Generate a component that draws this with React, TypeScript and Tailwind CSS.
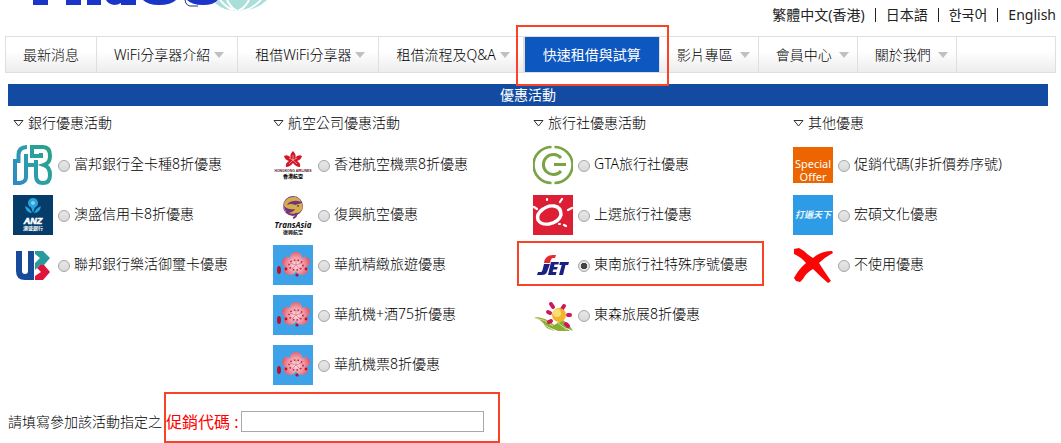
import React, { useState } from 'react';

interface NavItem {
  label: string;
  menu?: boolean;
  wide?: boolean;
  active?: boolean;
}

interface Offer {
  id: string;
  label: string;
  logo: React.ReactNode;
  marked?: boolean;
}

interface OfferGroup {
  title: string;
  offers: Offer[];
}

const FubonLogo = () => (
  <svg viewBox="0 0 40 40" className="h-10 w-10">
    <defs>
      <linearGradient id="fubon" gradientUnits="userSpaceOnUse" x1="0" x2="40" y1="30" y2="10">
        <stop offset="0" stopColor="#2f8bc4" />
        <stop offset="0.5" stopColor="#2a9fa8" />
        <stop offset="1" stopColor="#27a385" />
      </linearGradient>
    </defs>
    <g fill="none" stroke="url(#fubon)" strokeWidth="4">
      <path d="M14 2Q5.500 2 5.500 10V16H2V38H7Q13 37 13 32V9" />
      <path d="M13 20H23" />
      <path d="M23 15V31Q23 38 30 38Q37 38 37 30Q37 22 31 20Q37 18 37 11Q37 2 30 2H19V11H28V8" />
    </g>
  </svg>
);

const AnzLogo = () => (
  <svg viewBox="0 0 40 40" className="h-10 w-10">
    <rect width="40" height="40" fill="#053c69" />
    <g fill="#27a5df">
      <circle cx="20" cy="8" r="5" />
      <path d="M12 11Q17 13 19 18Q13 18 12 11ZM28 11Q23 13 21 18Q27 18 28 11Z" />
      <path d="M18 12H22L20 18Z" />
    </g>
    <circle cx="20" cy="8" r="2" fill="#8ccbe9" />
    <text x="20" y="29" fontSize="9" fontWeight="900" fontStyle="italic" textAnchor="middle" fill="#fff" stroke="#fff" strokeWidth="0.6" fontFamily="Liberation Sans, sans-serif">ANZ</text>
    <text x="20" y="35" fontSize="5" fontWeight="700" textAnchor="middle" fill="#fff" fontFamily="Noto Sans CJK TC, sans-serif">澳盛銀行</text>
  </svg>
);

const UnionLogo = () => (
  <svg viewBox="0 0 40 40" className="h-10 w-10">
    <path fill="#184a9b" d="M3 6H9V26Q9 29 12 29Q15 29 15 26V6H21V35H12Q3 35 3 26Z" />
    <path fill="#2a9a9c" d="M22 6H30L37 13L31 20H27L22 25V18L27 13L22 9Z" />
    <path fill="#e0133c" d="M27 20H31L37 27L30 35H22V31L28 27L24 23Z" />
  </svg>
);

const HongKongAirlinesLogo = () => (
  <svg viewBox="0 0 40 40" className="h-10 w-10">
    <path fill="#d51526" d="M20 6Q24 10 22 13Q25 9 29 11Q28 15 24 16Q28 18 27 22Q23 22 20 18Q17 22 13 22Q12 18 16 16Q12 15 11 11Q15 9 18 13Q16 10 20 6Z" />
    <path stroke="#fff" strokeWidth="0.5" d="M20 10V15L24 13M20 15L24 19M20 15L16 19M20 15L16 13" fill="none" />
    <text x="20" y="27" fontSize="3.4" fontWeight="700" textAnchor="middle" fill="#55101a" fontFamily="Liberation Sans, sans-serif">HONGKONG AIRLINES</text>
    <text x="20" y="33" fontSize="5" fontWeight="900" textAnchor="middle" fill="#111" fontFamily="Noto Sans CJK TC, sans-serif">香港航空</text>
  </svg>
);

const TransAsiaLogo = () => (
  <svg viewBox="0 0 40 40" className="h-10 w-10">
    <circle cx="20" cy="11" r="10" fill="#71357b" />
    <path fill="#d5ae48" d="M11 8Q14 1 22 2Q27 3 28 7Q24 5 20 6Q15 7 14 10Q18 8 22 10L29 8Q31 13 27 17Q22 20 15 18Q21 17 22 14Q16 15 12 12Q10 10 11 8Z" />
    <path d="M12 7Q9 12 13 17" stroke="#b88ac0" fill="none" />
    <path d="M20 23Q24 22 23 18" stroke="#71357b" strokeWidth="2" fill="none" />
    <circle cx="25" cy="11" r="1" fill="#71357b" />
    <text x="20" y="33" fontSize="8" fontWeight="700" fontStyle="italic" textAnchor="middle" fill="#111" fontFamily="Open Sans, sans-serif">TransAsia</text>
    <text x="20" y="39" fontSize="5" fontWeight="700" textAnchor="middle" fill="#111" fontFamily="Noto Sans CJK TC, sans-serif">復興航空</text>
  </svg>
);

const ChinaAirlinesLogo = () => (
  <svg viewBox="0 0 40 40" className="h-10 w-10">
    <defs>
      <radialGradient id="plum" cx="23" cy="20" r="14" gradientUnits="userSpaceOnUse">
        <stop offset="0" stopColor="#fbe3e6" />
        <stop offset="0.5" stopColor="#f1a3ae" />
        <stop offset="1" stopColor="#e0596c" />
      </radialGradient>
    </defs>
    <rect width="40" height="40" fill="#3ea2e9" />
    <g fill="url(#plum)">
      <ellipse cx="23" cy="12" rx="6" ry="5" />
      <ellipse cx="14" cy="17" rx="5" ry="5" />
      <ellipse cx="32" cy="17" rx="5" ry="5" />
      <ellipse cx="17" cy="25" rx="6" ry="5" />
      <ellipse cx="29" cy="25" rx="6" ry="5" />
      <circle cx="23" cy="20" r="6" />
    </g>
    <g fill="none" stroke="#c4263f" strokeWidth="1">
      <path d="M23 20L17 18M23 20L29 18M23 20L19 24M23 20L27 24M23 20V15" opacity="0.4" />
      <ellipse cx="23" cy="20" rx="7" ry="5" strokeWidth="1.6" strokeDasharray="1.5 2.2" />
    </g>
    <g fill="#b8102b">
      <ellipse cx="6" cy="25" rx="2" ry="4" />
      <circle cx="13" cy="24" r="1.4" />
      <circle cx="33" cy="24" r="1.4" />
      <circle cx="24" cy="30" r="1.6" />
    </g>
  </svg>
);

const GtaLogo = () => (
  <svg viewBox="0 0 40 40" className="h-10 w-10" fill="none" stroke="#7aa345">
    <path d="M21.5 2A18 18 0 0 1 21.5 38M18.5 38A18 18 0 0 1 18.5 2" strokeWidth="2.6" />
    <path d="M28 13A10 10 0 1 0 28 26" strokeWidth="3" />
    <path d="M21 19.5H33" strokeWidth="3" />
  </svg>
);

const SunLogo = () => (
  <svg viewBox="0 0 40 40" className="h-10 w-10">
    <rect width="40" height="40" fill="#dd1f35" />
    <path d="M10 14Q3 19 5 25Q8 30 16 29Q26 27 28 20Q28 12 21 11Q14 10 8 16" fill="none" stroke="#fff" strokeWidth="3.4" strokeLinecap="round" />
    <path d="M1 12L4 14M14 4V5M29 4L27 7M39 13L35 15M26 29L27 29M31 30L33 31" stroke="#fff" strokeWidth="2.2" strokeLinecap="round" />
  </svg>
);

const JetLogo = () => (
  <svg viewBox="0 0 40 40" className="h-10 w-10">
    <path fill="#e52a2d" d="M11 18Q12 10 20 10H23L22 13H20Q18 13 17 18Z" />
    <path fill="#1b2180" d="M11 19H17L14 27Q13 30 9 30H4L5 27H8Q9 27 9.500 25Z" />
    <path fill="#1b2180" d="M18 17H26L25.300 19.500H21.500L21 22H24.700L24 24.500H20.300L19.600 27H23.500L22.700 30H15Z" />
    <path fill="#1b2180" d="M27 17H36L35.200 20H32.500L30 30H26L28.700 20H26.300Z" />
  </svg>
);

const FlowerLogo = () => (
  <svg viewBox="0 0 40 40" className="h-10 w-10">
    <path fill="#8aad36" d="M1 22Q13 22 21 30L30 25Q36 29 40 36L31 32L37 36H25L13 31Q19 34 22 36Q12 34 11 29Q7 24 1 22Z" />
    <path d="M12 30L21 36M24 27L34 35M2 23Q12 24 20 31" stroke="#d6df91" fill="none" />
    <g stroke="#d0165c" strokeWidth="4" strokeLinecap="round">
      <path d="M18 9L20 12M31 11L29 14M37 20H35M35 31L33 29M16 27L18 26M15 17L17 18" />
    </g>
    <circle cx="26" cy="20" r="7" fill="#f2b42f" />
    <circle cx="24" cy="18" r="4" fill="#f8df75" />
  </svg>
);

const SpecialOfferLogo = () => (
  <span className="flex h-9 w-10 flex-col items-center justify-end bg-[#ec6500] text-[11px] font-normal leading-[13px] text-white">
    <span>Special</span>
    <span>Offer</span>
  </span>
);

const HongshuoLogo = () => (
  <svg viewBox="0 0 40 40" className="h-10 w-10">
    <rect width="40" height="40" fill="#2e9be6" />
    <text x="20" y="23" fontSize="9" fontWeight="700" fontStyle="italic" textAnchor="middle" fill="#e8f5fd" fontFamily="Noto Sans CJK TC, sans-serif">打遍天下</text>
  </svg>
);

const CrossLogo = () => (
  <svg viewBox="0 0 40 40" className="h-10 w-10">
    <path fill="#fb0606" d="M1 4L6 3L11 6Q15 10 20 13Q28 6 39 6L40 8Q32 12 26 18Q31 26 38 36L35 38Q28 32 20 24Q13 28 10 34L7 37L3 36L1 33Q5 25 13 18Q8 12 1 9Z" />
  </svg>
);

const SiteLogo = () => (
  <svg viewBox="0 0 252 14" className="h-[14px] w-[252px]">
    <path
      fill="#1b35c8"
      d="M9 0H24V5H9ZM42 0H57V5H42ZM63 0H77V5H63ZM82 0H112V5H97V3Q94 5 90 5Q84 4 82 0ZM119 0H152Q147 5 135 5Q124 5 119 0ZM163 0H194Q190 5 179 5Q168 5 163 0Z"
    />
    <path d="M161 0Q162 7 169 6H174" stroke="#26327d" fill="none" />
    <path d="M191 3L195 0H243Q232 11 214 11Q200 11 191 3Z" fill="#a9dfd8" />
    <path d="M203 0Q207 8 213 11M225 0Q221 8 214 11M237 0Q228 9 218 11M196 0Q203 8 209 10" stroke="#fff" strokeWidth="2" fill="none" />
  </svg>
);

const languages = ['繁體中文(香港)', '日本語', '한국어', 'English'];

const navItems: NavItem[] = [
  { label: '最新消息' },
  { label: 'WiFi分享器介紹', menu: true, wide: true },
  { label: '租借WiFi分享器', menu: true, wide: true },
  { label: '租借流程及Q&A', menu: true, wide: true },
  { label: '快速租借與試算', active: true },
  { label: '影片專區', menu: true },
  { label: '會員中心', menu: true },
  { label: '關於我們', menu: true }
];

const groups: OfferGroup[] = [
  {
    title: '銀行優惠活動',
    offers: [
      { id: 'fubon', label: '富邦銀行全卡種8折優惠', logo: <FubonLogo /> },
      { id: 'anz', label: '澳盛信用卡8折優惠', logo: <AnzLogo /> },
      { id: 'union', label: '聯邦銀行樂活御璽卡優惠', logo: <UnionLogo /> }
    ]
  },
  {
    title: '航空公司優惠活動',
    offers: [
      { id: 'hka', label: '香港航空機票8折優惠', logo: <HongKongAirlinesLogo /> },
      { id: 'transasia', label: '復興航空優惠', logo: <TransAsiaLogo /> },
      { id: 'cal-tour', label: '華航精緻旅遊優惠', logo: <ChinaAirlinesLogo /> },
      { id: 'cal-hotel', label: '華航機+酒75折優惠', logo: <ChinaAirlinesLogo /> },
      { id: 'cal-ticket', label: '華航機票8折優惠', logo: <ChinaAirlinesLogo /> }
    ]
  },
  {
    title: '旅行社優惠活動',
    offers: [
      { id: 'gta', label: 'GTA旅行社優惠', logo: <GtaLogo /> },
      { id: 'sun', label: '上選旅行社優惠', logo: <SunLogo /> },
      { id: 'jet', label: '東南旅行社特殊序號優惠', logo: <JetLogo />, marked: true },
      { id: 'flower', label: '東森旅展8折優惠', logo: <FlowerLogo /> }
    ]
  },
  {
    title: '其他優惠',
    offers: [
      { id: 'promo', label: '促銷代碼(非折價券序號)', logo: <SpecialOfferLogo /> },
      { id: 'hongshuo', label: '宏碩文化優惠', logo: <HongshuoLogo /> },
      { id: 'none', label: '不使用優惠', logo: <CrossLogo /> }
    ]
  }
];

const MenuArrow = () => (
  <svg viewBox="0 0 10 6" className="h-[6px] w-[10px] shrink-0">
    <path d="M0 0H10L5 6Z" fill="#c0c0c0" />
  </svg>
);

const App: React.FC = () => {
  const [selected, setSelected] = useState('jet');
  const [code, setCode] = useState('');

  return (
    <div className="bg-white font-['Noto_Sans','Noto_Sans_CJK_TC','Noto_Sans_CJK_KR',sans-serif] text-sm font-light leading-5 text-black">
      <header className="flex h-9 items-start justify-between pl-6 pr-[5px]">
        <SiteLogo />
        <div className="flex items-center pt-[5px] font-normal text-[#222]">
          {languages.map((lang, i) => (
            <React.Fragment key={lang}>
              {i > 0 && <span className="mx-[10px] h-[14px] w-px bg-[#222]" />}
              <a href="#" className="whitespace-nowrap">{lang}</a>
            </React.Fragment>
          ))}
        </div>
      </header>

      <nav className="mx-[5px] flex border border-[#dfdfdf] bg-linear-to-b from-white from-40% to-[#ededed]">
        {navItems.map((item) =>
          item.active ? (
            <a
              key={item.label}
              href="#"
              className="relative flex h-[35px] items-center whitespace-nowrap border-x border-[#dfdfdf] bg-[#0d57c1] bg-clip-padding px-[18px] font-normal text-white"
            >
              {item.label}
              <span className="pointer-events-none absolute -bottom-[14px] -left-[9px] -right-[10px] -top-[12px] z-10 border-2 border-[#fa4226]" />
            </a>
          ) : (
            <a
              key={item.label}
              href="#"
              className={`flex h-[35px] items-center whitespace-nowrap border-r border-[#dfdfdf] pl-[17px] ${
                item.wide ? 'gap-1 pr-[13px]' : item.menu ? 'gap-[7px] pr-2' : 'pr-[17px]'
              }`}
            >
              {item.label}
              {item.menu && <MenuArrow />}
            </a>
          )
        )}
      </nav>

      <main className="ml-2 mr-[13px] pt-[11px]">
        <h1 className="h-[22px] bg-[#144ba2] text-center font-normal leading-[22px] text-white">優惠活動</h1>

        <div className="grid grid-cols-4 pt-[7px]">
          {groups.map((group) => (
            <fieldset key={group.title} className="min-w-0 pl-[5px]">
              <legend className="flex items-center gap-1">
                <svg viewBox="0 0 11 7" className="h-[7px] w-[11px]">
                  <path d="M1 0.500H10L5.500 6Z" fill="none" stroke="#333" />
                </svg>
                {group.title}
              </legend>
              <div className="flex flex-col gap-[10px] pt-3">
                {group.offers.map((offer) => (
                  <div key={offer.id} className="relative flex h-10 items-center">
                    <span className="flex w-10 shrink-0 justify-center">{offer.logo}</span>
                    <input
                      id={offer.id}
                      type="radio"
                      name="offer"
                      checked={selected === offer.id}
                      onChange={() => setSelected(offer.id)}
                      className="ml-[5px] mt-0.5 h-3 w-3 shrink-0 appearance-none rounded-full border border-[#a5a5a5] bg-linear-to-b from-[#e8e8e8] to-[#d9d9d9] checked:bg-[radial-gradient(circle,#444_0_3px,#e4e4e4_3px)]"
                    />
                    <label htmlFor={offer.id} className="whitespace-nowrap pb-[2px] pl-1">
                      {offer.label}
                    </label>
                    {offer.marked && (
                      <span className="pointer-events-none absolute -left-4 -top-1 h-[45px] w-[247px] border-2 border-[#fa4226]" />
                    )}
                  </div>
                ))}
              </div>
            </fieldset>
          ))}
        </div>

        <div className="flex items-center gap-[2px] pt-[7px]">
          <span className="pt-2">請填寫參加該活動指定之</span>
          <div className="flex items-center border-2 border-[#fa4226] pb-[9px] pr-[14px] pt-[17px]">
            <label htmlFor="promo-code" className="whitespace-nowrap pr-[3px] text-base font-normal leading-5 text-[#ff0000]">
              促銷代碼 :
            </label>
            <input
              id="promo-code"
              type="text"
              value={code}
              onChange={(e) => setCode(e.target.value)}
              className="h-[21px] w-[243px] border border-[#a9a9a9] bg-white px-1 outline-none"
            />
          </div>
        </div>
      </main>
    </div>
  );
};

export default App;
